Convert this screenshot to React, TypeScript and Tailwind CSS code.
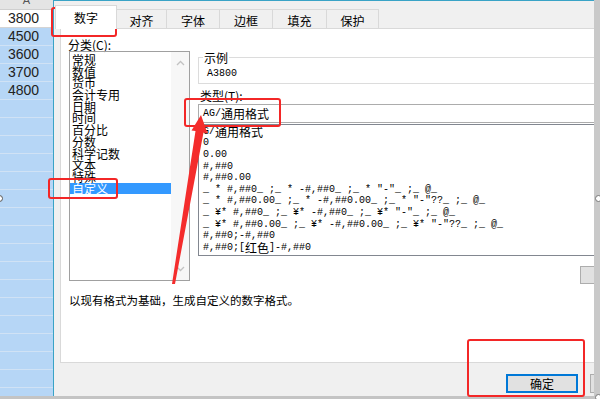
import React from 'react'

const CJK_SPLIT = /([\u3000-\u303f\u4e00-\u9fff\uff00-\uffef]+)/
const CJK_TEST = /[\u3000-\u303f\u4e00-\u9fff\uff00-\uffef]/

// SimSun-like mix: half-width ascii 6px, full-width cjk 12px
function Mixed({ text }: { text: string }) {
  return (
    <>
      {text.split(CJK_SPLIT).map((part, i) =>
        part === '' ? null : CJK_TEST.test(part) ? (
          <span key={i} className="font-['Noto_Sans_CJK_SC',sans-serif] text-[12px] leading-[12px]">
            {part}
          </span>
        ) : (
          <span key={i} className="font-['Liberation_Mono',monospace] text-[10px] leading-[12px]">
            {part}
          </span>
        )
      )}
    </>
  )
}

const sheetRows = ['3800', '4500', '3600', '3700', '4800']

const tabs = [
  { label: '对齐', w: 'w-[50px]' },
  { label: '字体', w: 'w-[53px]' },
  { label: '边框', w: 'w-[53px]' },
  { label: '填充', w: 'w-[54px]' },
  { label: '保护', w: 'w-[52px]' },
]

const categories = ['常规', '数值', '货币', '会计专用', '日期', '时间', '百分比', '分数', '科学记数', '文本', '特殊', '自定义']

const formats = [
  'G/通用格式',
  '0',
  '0.00',
  '#,##0',
  '#,##0.00',
  '_ * #,##0_ ;_ * -#,##0_ ;_ * "-"_ ;_ @_',
  '_ * #,##0.00_ ;_ * -#,##0.00_ ;_ * "-"??_ ;_ @_',
  '_ ¥* #,##0_ ;_ ¥* -#,##0_ ;_ ¥* "-"_ ;_ @_',
  '_ ¥* #,##0.00_ ;_ ¥* -#,##0.00_ ;_ ¥* "-"??_ ;_ @_',
  '#,##0;-#,##0',
  '#,##0;[红色]-#,##0',
]

function Sheet() {
  return (
    <div className="w-[53px] h-[396px] flex-none flex flex-col overflow-hidden bg-[#b6d6f6]">
      <div className="h-[10px] flex-none bg-[#e4e4e4] border-b border-[#cfcfcf] overflow-hidden flex justify-center">
        <span className="text-[11px] leading-[11px] -mt-[5px] text-[#555] font-['Liberation_Sans',sans-serif]">A</span>
      </div>
      {sheetRows.map((n, i) => (
        <div
          key={n}
          className={
            i === 0
              ? 'h-[18px] flex-none bg-white border-b border-[#d4d4d4] flex items-center pl-[8px] text-[14px] font-["Liberation_Sans",sans-serif] text-[#222]'
              : 'h-[18px] flex-none border-b border-[#d0e2f5] flex items-center pl-[8px] text-[14px] font-["Liberation_Sans",sans-serif] text-[#222]'
          }
        >
          {n}
        </div>
      ))}
      {Array.from({ length: 18 }).map((_, i) => (
        <div key={i} className="h-[18px] flex-none border-b border-[#d0e2f5]" />
      ))}
    </div>
  )
}

function Chevron({ up }: { up?: boolean }) {
  return (
    <svg width="9" height="6" viewBox="0 0 9 6" className="text-[#c2c2c2]">
      <path d={up ? 'M1 5 L4.5 1.5 L8 5' : 'M1 1 L4.5 4.5 L8 1'} fill="none" stroke="currentColor" strokeWidth="1.3" />
    </svg>
  )
}

function Dialog() {
  return (
    <div className="w-[540px] flex-none h-[396px] bg-[#f0f0f0] border-t border-[#39a3c6] overflow-hidden flex flex-col text-[12px] text-black font-['Noto_Sans_CJK_SC',sans-serif]">
      {/* Tabs */}
      <div className="h-[27px] flex-none flex items-end">
        <div className="ml-px w-[62px] h-[24px] -mb-px relative z-10 bg-white border-x border-t border-[#d9d9d9] flex justify-center pt-[5px] leading-[13px]">
          数字
        </div>
        {tabs.map((t) => (
          <div
            key={t.label}
            className={`${t.w} h-[19px] border-t border-r border-[#d9d9d9] flex justify-center pt-[4px] leading-[13px]`}
          >
            {t.label}
          </div>
        ))}
      </div>

      {/* Panel */}
      <div className="ml-[6px] w-[560px] h-[335px] flex-none bg-white border-l border-t border-b border-[#d9d9d9] pl-[8px] flex flex-col">
        <div className="flex pt-[9px]">
          <div className="w-[121px] flex-none flex flex-col">
            <div className="h-[13px] leading-[13px] -ml-px">分类(C):</div>
            <div className="h-[230px] border border-[#a0a0a0] flex">
              <div className="flex-1 flex flex-col pt-[2px]">
                {categories.map((c) => (
                  <div
                    key={c}
                    className={
                      c === '自定义'
                        ? 'h-[11.7px] flex-none leading-[11.7px] pl-[2px] bg-[#3399ff] text-white'
                        : 'h-[11.7px] flex-none leading-[11.7px] pl-[2px]'
                    }
                  >
                    {c}
                  </div>
                ))}
              </div>
              <div className="w-[18px] flex-none bg-[#f7f7f7] flex flex-col items-center justify-between py-[8px]">
                <Chevron up />
                <Chevron />
              </div>
            </div>
          </div>

          <div className="ml-[8px] flex-1 mt-[13px] flex flex-col">
            <fieldset className="border border-[#dcdcdc]">
              <legend className="ml-[4px] px-px text-[12px] leading-[13px]">示例</legend>
              <div className="h-[19px] flex items-center pl-[8px]">
                <Mixed text="A3800" />
              </div>
            </fieldset>
            <div className="mt-[5px] h-[13px] leading-[13px] ml-[2px]">类型(T):</div>
            <div className="mt-[2px] h-[19px] border border-[#acacac] pl-[4px] flex items-center">
              <Mixed text="AG/通用格式" />
            </div>
            <div className="mt-px h-[132px] border border-[#828790] pt-px pl-[4px] flex flex-col overflow-hidden">
              {formats.map((f) => (
                <div key={f} className="h-[11.6px] flex-none flex items-center whitespace-pre">
                  <Mixed text={f} />
                </div>
              ))}
            </div>
            <div className="mt-[10px] ml-auto w-[40px] h-[18px] bg-[#e1e1e1] border border-[#adadad]" />
          </div>
        </div>
        <div className="mt-[9px] leading-[14px] text-[11.5px]">以现有格式为基础，生成自定义的数字格式。</div>
      </div>

      {/* Buttons */}
      <div className="flex mt-[11px] ml-[452px]">
        <div className="w-[72px] h-[19px] flex-none border-2 border-[#0078d7] bg-[#e1e1e1] flex items-center justify-center leading-[12px]">
          确定
        </div>
        <div className="ml-[12px] w-[72px] h-[19px] flex-none border border-[#adadad] bg-[#e1e1e1]" />
      </div>
    </div>
  )
}

export default function App() {
  return (
    <div className="w-[600px] h-[399px] relative overflow-hidden flex flex-col bg-white">
      <div className="h-[396px] flex-none flex">
        <Sheet />
        <div className="w-px flex-none bg-[#39a3c6]" />
        <Dialog />
        <div className="w-[6px] flex-none bg-[#c9c9c9]" />
      </div>
      <div className="h-[3px] flex-none bg-[#c4c4c4]" />

      {/* annotation boxes */}
      <div className="absolute left-[51px] top-[7px] w-[66px] h-[30px] border-[2.5px] border-[#f32727] rounded-[3px]" />
      <div className="absolute left-[48px] top-[178px] w-[70px] h-[21px] border-[2.5px] border-[#f32727] rounded-[3px]" />
      <div className="absolute left-[184px] top-[98px] w-[97px] h-[29px] border-[2.5px] border-[#f32727] rounded-[3px]" />
      <div className="absolute left-[467px] top-[339px] w-[118px] h-[58px] border-[2.5px] border-[#f32727] rounded-[3px]" />

      {/* arrow */}
      <svg className="absolute left-0 top-0 pointer-events-none" width="600" height="399" viewBox="0 0 600 399">
        <polygon
          points="201,115 207.5,133.5 203.5,132.5 175,284 172,284 195.5,131 191.5,130.5"
          fill="#f42c2c"
        />
      </svg>

      {/* selection handles */}
      <div className="absolute -left-[4px] top-[195px] w-[7px] h-[7px] rounded-full bg-white border border-[#555]" />
      <div className="absolute left-[595px] top-[195px] w-[7px] h-[7px] rounded-full bg-white border border-[#777]" />
      <div className="absolute left-[595px] top-[394px] w-[7px] h-[7px] rounded-full bg-white border border-[#777]" />
    </div>
  )
}
